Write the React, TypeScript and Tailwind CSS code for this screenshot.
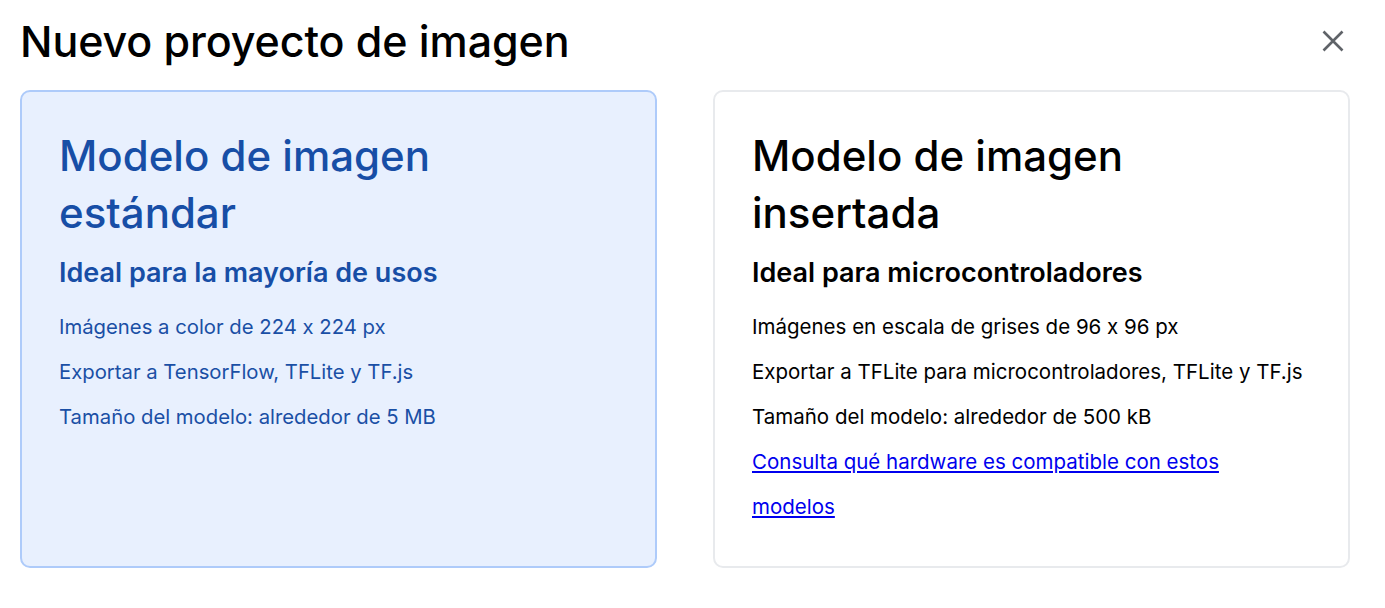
import React from "react";

export default function App() {
  return (
    <div className="w-[1385px] h-[608px] bg-white overflow-hidden text-black [font-feature-settings:'calt'_0]" style={{ fontFamily: "Inter, 'Open Sans', sans-serif" }}>
      <div className="flex items-start justify-between pl-[20px] pr-[41px] pt-[13px]">
        <h1 className="text-[43px] leading-[56px] font-medium tracking-[-0.1px]">Nuevo proyecto de imagen</h1>
        <button className="mt-[17px] w-[22px] h-[22px] flex items-center justify-center">
          <svg width="22" height="22" viewBox="0 0 22 22">
            <path d="M1.5 1.5 L20.5 20.5 M20.5 1.5 L1.5 20.5" stroke="#5f6368" strokeWidth="2.6" strokeLinecap="butt" />
          </svg>
        </button>
      </div>
      <div className="flex gap-[56px] pl-[20px] mt-[21px]">
        <div className="w-[637px] h-[478px] rounded-[10px] border-2 border-[#aecbfa] bg-[#e8f0fe] px-[37px] pt-[35px] text-[#174ea6]">
          <h2 className="text-[42px] leading-[57px] font-medium">Modelo de imagen<br />estándar</h2>
          <h3 className="text-[27px] leading-[30px] font-semibold mt-[17px]">Ideal para la mayoría de usos</h3>
          <ul className="text-[20.3px] leading-[45px] mt-[16px] text-[#1a4fa5]">
            <li>Imágenes a color de 224 x 224 px</li>
            <li>Exportar a TensorFlow, TFLite y TF.js</li>
            <li>Tamaño del modelo: alrededor de 5 MB</li>
          </ul>
        </div>
        <div className="w-[637px] h-[478px] rounded-[10px] border-2 border-[#e8eaed] bg-white px-[37px] pt-[35px]">
          <h2 className="text-[42px] leading-[57px] font-medium">Modelo de imagen<br />insertada</h2>
          <h3 className="text-[27px] leading-[30px] font-semibold mt-[17px]">Ideal para microcontroladores</h3>
          <ul className="text-[20.5px] leading-[45px] mt-[16px]">
            <li>Imágenes en escala de grises de 96 x 96 px</li>
            <li>Exportar a TFLite para microcontroladores, TFLite y TF.js</li>
            <li>Tamaño del modelo: alrededor de 500 kB</li>
            <li className="max-w-[500px]">
              <a href="#" className="text-[#0000ee] underline">Consulta qué hardware es compatible con estos modelos</a>
            </li>
          </ul>
        </div>
      </div>
    </div>
  );
}
